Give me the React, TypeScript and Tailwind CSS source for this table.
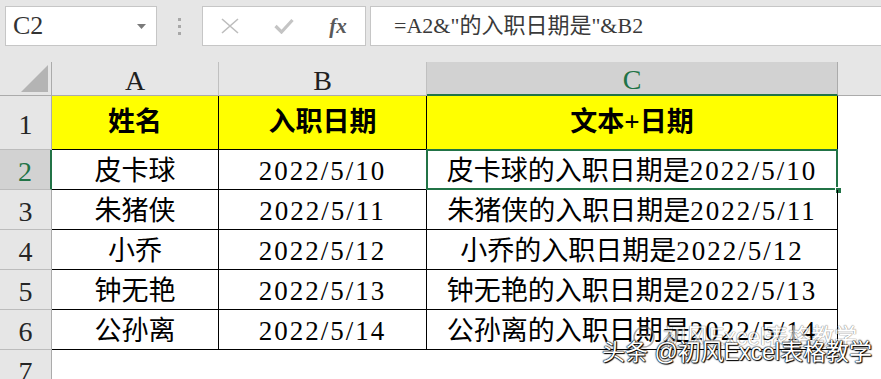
import React from 'react';

const rows = [
  { name: '皮卡球', date: '2022/5/10' },
  { name: '朱猪侠', date: '2022/5/11' },
  { name: '小乔', date: '2022/5/12' },
  { name: '钟无艳', date: '2022/5/13' },
  { name: '公孙离', date: '2022/5/14' },
];

const cellFont = "font-['Liberation_Serif','Noto_Sans_CJK_SC',serif]";

function RowHead({ n, active }: { n: number; active?: boolean }) {
  return (
    <div
      className={
        active
          ? 'flex items-center justify-center bg-[#d2d2d2] text-[#217346] border-b border-[#bcbcbc] border-r-2 border-r-[#217346] text-[28px] leading-none pt-1'
          : 'flex items-center justify-center bg-[#e6e6e6] text-[#262626] border-b border-[#bcbcbc] border-r border-r-[#ababab] text-[28px] leading-none pt-1'
      }
    >
      {n}
    </div>
  );
}

function Date({ d }: { d: string }) {
  return <span className="tracking-[2px]">{d}</span>;
}

export default function App() {
  return (
    <div className={`w-[881px] h-[379px] overflow-hidden bg-white relative ${cellFont}`}>
      {/* formula bar */}
      <div className="h-[62px] bg-[#e6e6e6] flex items-start pt-[6px]">
        <div className="ml-[5px] w-[152px] h-[40px] bg-white border border-[#c6c6c6] flex items-center justify-between pl-[7px] pr-[10px]">
          <span className="text-[26px] leading-none text-[#333]">C2</span>
          <svg width="9" height="5" viewBox="0 0 9 5">
            <path d="M0 0 L9 0 L4.5 5 Z" fill="#7a7a7a" />
          </svg>
        </div>
        <div className="w-[45px] h-[40px] flex flex-col items-center justify-center gap-[4px]">
          <span className="w-[3px] h-[3px] bg-[#a8a8a8]" />
          <span className="w-[3px] h-[3px] bg-[#a8a8a8]" />
          <span className="w-[3px] h-[3px] bg-[#a8a8a8]" />
        </div>
        <div className="w-[164px] h-[40px] bg-white border border-[#c6c6c6] grid grid-cols-3 items-center">
          <div className="flex justify-center">
            <svg width="18" height="16" viewBox="0 0 18 16">
              <path d="M1 1 L17 15 M17 1 L1 15" stroke="#bdbdbd" strokeWidth="1.6" />
            </svg>
          </div>
          <div className="flex justify-center">
            <svg width="20" height="16" viewBox="0 0 20 16">
              <path d="M1.5 8 L7.5 14 L18.5 2" stroke="#c4c4c4" strokeWidth="3.2" fill="none" />
            </svg>
          </div>
          <div className="flex justify-center">
            <span className="italic font-bold text-[21px] leading-none text-[#595959]">fx</span>
          </div>
        </div>
        <div className="ml-[4px] flex-1 h-[40px] bg-white border border-r-0 border-[#c6c6c6] flex items-center pl-[23px]">
          <span className="text-[22px] leading-none text-[#3a3a3a]">=A2&amp;"的入职日期是"&amp;B2</span>
        </div>
      </div>

      {/* sheet */}
      <div className="grid grid-cols-[52px_167px_208px_411px_1fr] grid-rows-[34px_54px_40px_40px_40px_40px_40px_40px]">
        {/* column headers */}
        <div className="bg-[#e6e6e6] border-r border-b border-[#ababab] flex items-end justify-end p-[3px]">
          <svg width="27" height="27" viewBox="0 0 27 27">
            <path d="M27 0 L27 27 L0 27 Z" fill="#b4b4b4" />
          </svg>
        </div>
        <div className="bg-[#e6e6e6] border-r border-b border-[#ababab] border-r-[#c0c0c0] flex items-center justify-center text-[28px] leading-none text-[#1f1f1f] pt-1">A</div>
        <div className="bg-[#e6e6e6] border-r border-b border-[#ababab] border-r-[#c0c0c0] flex items-center justify-center text-[28px] leading-none text-[#1f1f1f] pt-1">B</div>
        <div className="bg-[#d2d2d2] border-r border-r-[#ababab] border-b-2 border-b-[#217346] flex items-center justify-center text-[28px] leading-none text-[#217346] pt-1">C</div>
        <div className="bg-[#e6e6e6] border-b border-[#ababab]" />

        {/* row 1 */}
        <RowHead n={1} />
        <div className="bg-[#ffff00] border-r border-b border-black flex items-center justify-center text-[27px] font-bold leading-none">姓名</div>
        <div className="bg-[#ffff00] border-r border-b border-black flex items-center justify-center text-[27px] font-bold leading-none">入职日期</div>
        <div className="bg-[#ffff00] border-r border-b border-black flex items-center justify-center text-[27px] font-bold leading-none">文本+日期</div>
        <div />

        {rows.map((r, i) => (
          <React.Fragment key={r.date}>
            <RowHead n={i + 2} active={i === 0} />
            <div className="border-r border-b border-black flex items-center justify-center text-[27px] leading-none text-black pt-[3px]">{r.name}</div>
            <div className="border-r border-b border-black flex items-center justify-center text-[27px] leading-none text-black pt-[3px]">
              <Date d={r.date} />
            </div>
            <div className="relative border-r border-b border-black flex items-center justify-center text-[27px] leading-none text-black pt-[3px]">
              <span>
                {r.name}的入职日期是<Date d={r.date} />
              </span>
              {i === 0 && (
                <>
                  <div className="absolute -left-px -top-px -right-px -bottom-px border-2 border-[#217346]" />
                  <div className="absolute -right-[5px] -bottom-[5px] w-[7px] h-[7px] bg-[#217346] border border-white" />
                </>
              )}
            </div>
            <div />
          </React.Fragment>
        ))}

        <RowHead n={7} />
        <div />
        <div />
        <div />
        <div />
      </div>

      {/* watermark */}
      <div className="absolute left-[632px] top-[325px] flex items-center gap-[7px] opacity-60 font-['Liberation_Sans','Noto_Sans_CJK_SC',sans-serif]">
        <svg width="24" height="24" viewBox="0 0 24 24">
          <circle cx="12" cy="12" r="10" fill="none" stroke="#777" strokeWidth="1.5" />
          <circle cx="8.5" cy="10" r="1.3" fill="#777" />
          <circle cx="15.5" cy="10" r="1.3" fill="#777" />
        </svg>
        <span className="text-[23px] leading-none text-white [text-shadow:0_0_1px_#555,0_0_1px_#555,0_0_1px_#555]">初风Excel表格教学</span>
      </div>
      <div className="absolute left-[602px] top-[341px] font-['Liberation_Sans','Noto_Sans_CJK_SC',sans-serif] text-[23px] leading-none text-white [text-shadow:0_0_1px_#000,0_0_1px_#000,0_0_2px_#000,1px_1px_1px_#000]">
        头条 @初风Excel表格教学
      </div>
    </div>
  );
}
